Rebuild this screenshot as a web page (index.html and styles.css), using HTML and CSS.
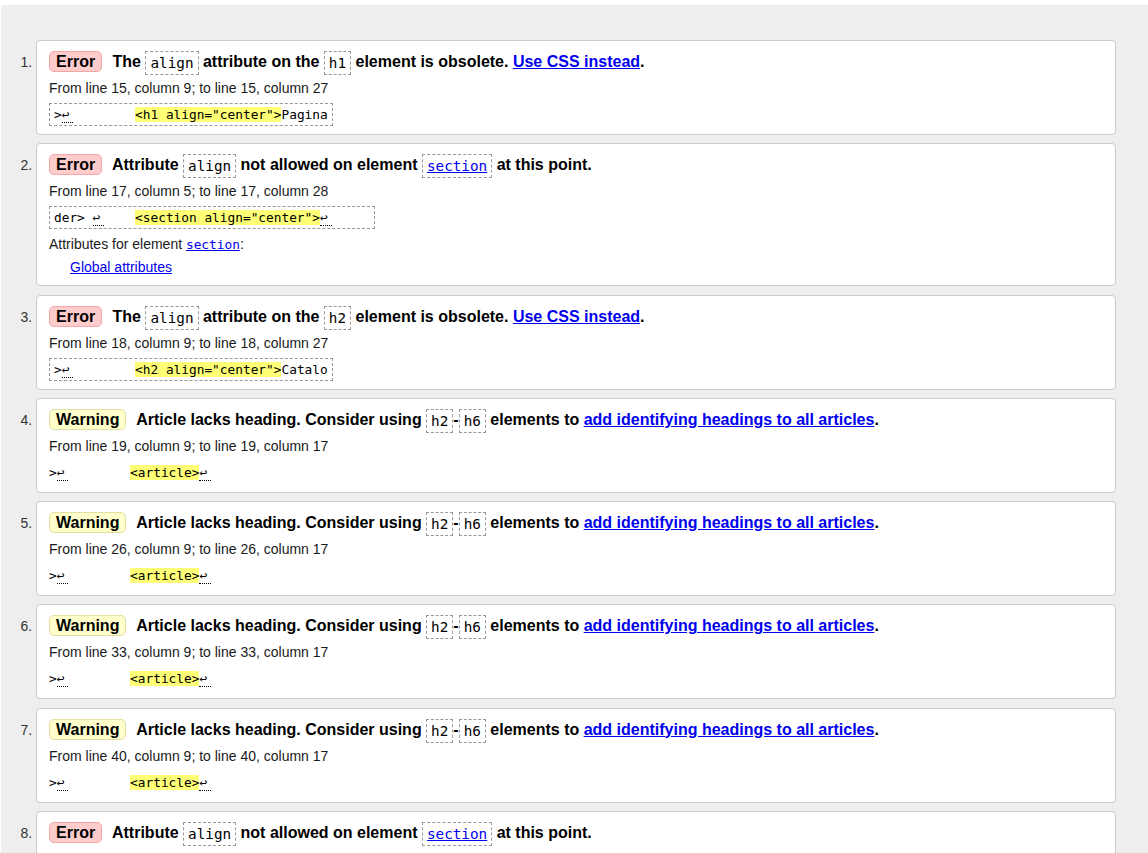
FILE: index.html
```html
<!DOCTYPE html>
<html lang="en">
<head>
<meta charset="utf-8">
<title>Validation results</title>
<link rel="stylesheet" href="styles.css">
</head>
<body>
<div class="results">
  <ol class="messages">
    <li class="msg">
      <p class="title"><strong class="badge badge-error">Error</strong> The <code class="ic">align</code> attribute on the <code class="ic">h1</code> element is obsolete. <a class="strong-link" href="#">Use CSS instead</a>.</p>
      <p class="loc">From line 15, column 9; to line 15, column 27</p>
      <code class="extract">&gt;<span class="lf">↩</span>        <mark>&lt;h1 align="center"&gt;</mark>Pagina</code>
    </li>
    <li class="msg">
      <p class="title"><strong class="badge badge-error">Error</strong> Attribute <code class="ic">align</code> not allowed on element <code class="ic"><a href="#">section</a></code> at this point.</p>
      <p class="loc">From line 17, column 5; to line 17, column 28</p>
      <code class="extract">der&gt; <span class="lf">↩</span>    <mark>&lt;section align="center"&gt;</mark><span class="lf">↩</span>     </code>
      <p class="attrs">Attributes for element <a class="mono-link" href="#">section</a>:</p>
      <p class="attr-list"><a href="#">Global attributes</a></p>
    </li>
    <li class="msg">
      <p class="title"><strong class="badge badge-error">Error</strong> The <code class="ic">align</code> attribute on the <code class="ic">h2</code> element is obsolete. <a class="strong-link" href="#">Use CSS instead</a>.</p>
      <p class="loc">From line 18, column 9; to line 18, column 27</p>
      <code class="extract">&gt;<span class="lf">↩</span>        <mark>&lt;h2 align="center"&gt;</mark>Catalo</code>
    </li>
    <li class="msg">
      <p class="title"><strong class="badge badge-warning">Warning</strong> Article lacks heading. Consider using <code class="ic">h2</code>-<code class="ic">h6</code> elements to <a class="strong-link" href="#">add identifying headings to all articles</a>.</p>
      <p class="loc">From line 19, column 9; to line 19, column 17</p>
      <code class="extract extract-plain">&gt;<span class="lf">↩</span>        <mark>&lt;article&gt;</mark><span class="lf">↩</span></code>
    </li>
    <li class="msg">
      <p class="title"><strong class="badge badge-warning">Warning</strong> Article lacks heading. Consider using <code class="ic">h2</code>-<code class="ic">h6</code> elements to <a class="strong-link" href="#">add identifying headings to all articles</a>.</p>
      <p class="loc">From line 26, column 9; to line 26, column 17</p>
      <code class="extract extract-plain">&gt;<span class="lf">↩</span>        <mark>&lt;article&gt;</mark><span class="lf">↩</span></code>
    </li>
    <li class="msg">
      <p class="title"><strong class="badge badge-warning">Warning</strong> Article lacks heading. Consider using <code class="ic">h2</code>-<code class="ic">h6</code> elements to <a class="strong-link" href="#">add identifying headings to all articles</a>.</p>
      <p class="loc">From line 33, column 9; to line 33, column 17</p>
      <code class="extract extract-plain">&gt;<span class="lf">↩</span>        <mark>&lt;article&gt;</mark><span class="lf">↩</span></code>
    </li>
    <li class="msg">
      <p class="title"><strong class="badge badge-warning">Warning</strong> Article lacks heading. Consider using <code class="ic">h2</code>-<code class="ic">h6</code> elements to <a class="strong-link" href="#">add identifying headings to all articles</a>.</p>
      <p class="loc">From line 40, column 9; to line 40, column 17</p>
      <code class="extract extract-plain">&gt;<span class="lf">↩</span>        <mark>&lt;article&gt;</mark><span class="lf">↩</span></code>
    </li>
    <li class="msg">
      <p class="title"><strong class="badge badge-error">Error</strong> Attribute <code class="ic">align</code> not allowed on element <code class="ic"><a href="#">section</a></code> at this point.</p>
      <p class="loc">From line 41, column 5; to line 41, column 28</p>
      <code class="extract">der&gt; <span class="lf">↩</span>    <mark>&lt;section align="center"&gt;</mark><span class="lf">↩</span>     </code>
    </li>
  </ol>
</div>
</body>
</html>
```
FILE: styles.css
```css
html, body {
  margin: 0;
  padding: 0;
  background: #fff;
  overflow: hidden;
}

body {
  font-family: "Liberation Sans", Arial, sans-serif;
  color: #000;
  height: 853px;
}

.results {
  margin: 5px 0 0 1px;
  background: #eee;
  border-top-left-radius: 4px;
  padding: 35px 32px 40px 35px;
  min-height: 900px;
}

.messages {
  margin: 0;
  padding: 0;
  list-style: decimal outside;
}

.msg {
  background: #fff;
  border: 1px solid #ccc;
  border-radius: 4px;
  padding: 7px 12px 8px;
  margin: 0 0 8.25px;
}

.msg::marker {
  font-family: "Liberation Sans", Arial, sans-serif;
  font-size: 14px;
  color: #333;
}

.title {
  margin: 0;
  font-size: 16px;
  font-weight: bold;
  line-height: 28px;
}

.badge {
  display: inline-block;
  line-height: 19px;
  padding: 0 6px;
  border-radius: 5px;
  margin-right: 6px;
  vertical-align: 0;
}

.badge-error {
  background: #ffcccc;
  border: 1px solid #f2a6a6;
}

.badge-warning {
  background: #ffffcc;
  border: 1px solid #e2dfa0;
}

.ic {
  display: inline-block;
  font-family: "DejaVu Sans Mono", monospace;
  font-weight: normal;
  font-size: 14.3px;
  line-height: 22px;
  padding: 0 4px;
  border: 1px dashed #999;
  vertical-align: -1px;
}

.ic a {
  color: #00e;
}

a {
  color: #00e;
  text-decoration: underline;
}

.strong-link {
  font-weight: bold;
}

.loc {
  margin: 2px 0 0;
  font-size: 14px;
  line-height: 20px;
  color: #1a1a1a;
}

.extract {
  display: inline-block;
  margin-top: 5px;
  white-space: pre;
  font-family: "DejaVu Sans Mono", monospace;
  font-size: 12.8px;
  line-height: 17px;
  padding: 2px 4px;
  border: 1px dashed #999;
  color: #000;
}

.extract-plain {
  border-color: transparent;
  padding-left: 0;
  padding-right: 0;
  margin-left: -1px;
}

.extract mark {
  background: #ffff77;
  color: #000;
}

.lf {
  padding-right: 4px;
  border-bottom: 1px dotted #000;
}

.attrs {
  margin: 5px 0 0;
  font-size: 14px;
  line-height: 20px;
  color: #1a1a1a;
}

.mono-link {
  font-family: "DejaVu Sans Mono", monospace;
  font-size: 12.8px;
}

.attr-list {
  margin: 2px 0 0 21px;
  font-size: 14px;
  line-height: 20px;
}
```
